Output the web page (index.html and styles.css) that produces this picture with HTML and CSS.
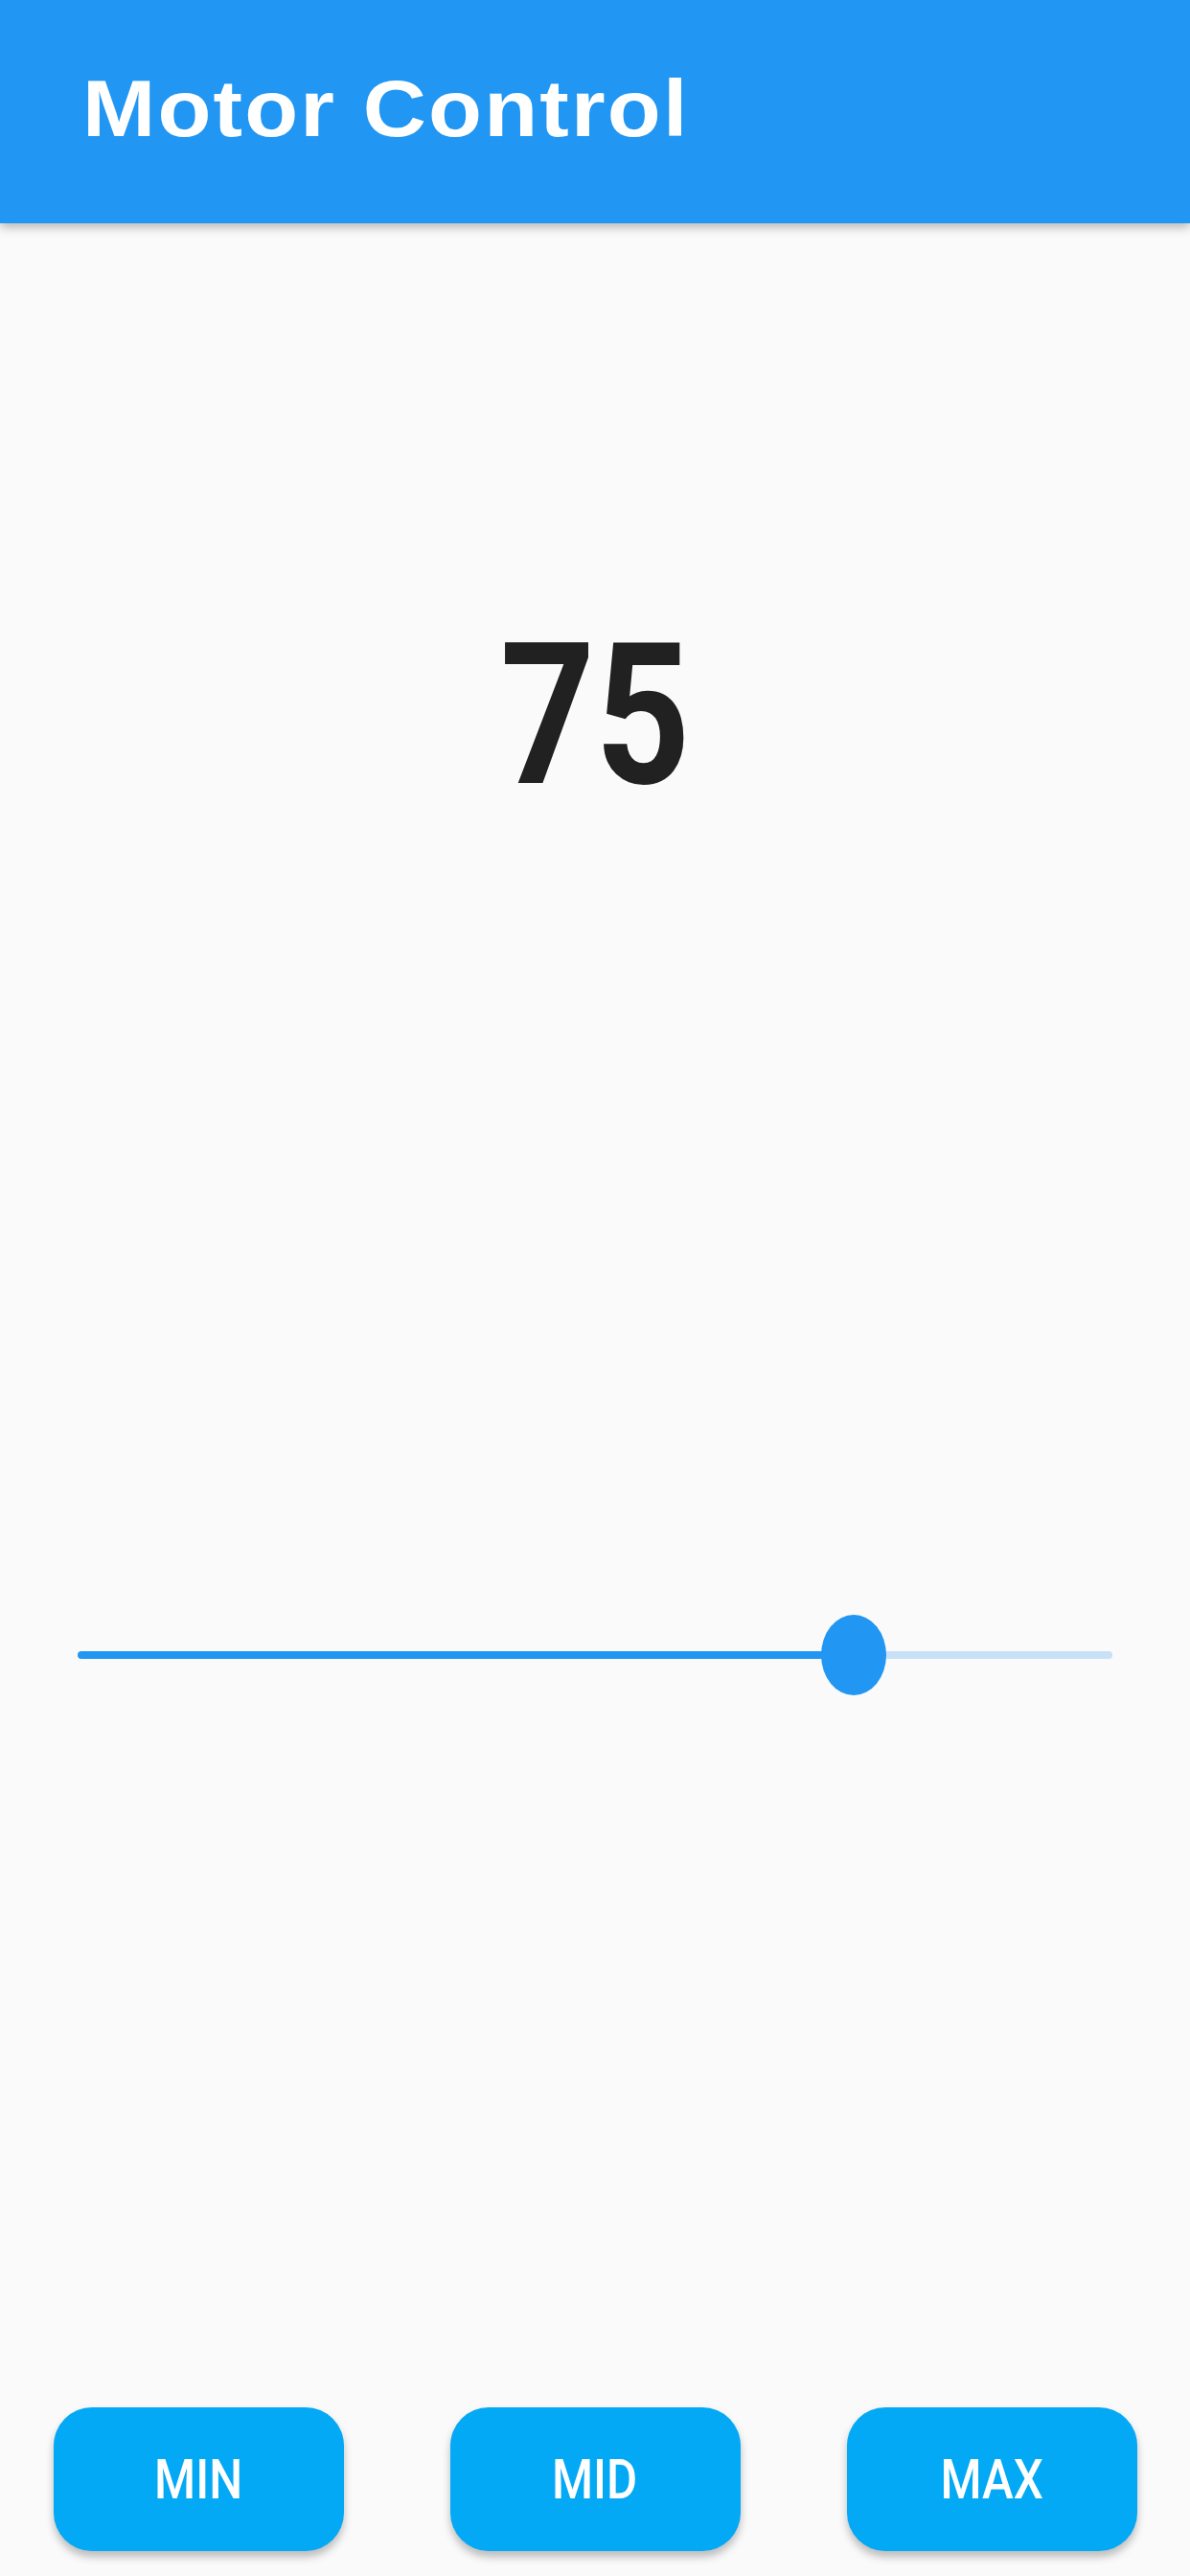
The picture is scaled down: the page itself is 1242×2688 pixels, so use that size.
FILE: index.html
```html
<!DOCTYPE html>
<html lang="en">

<head>
    <meta charset="UTF-8">
    <meta name="viewport" content="width=device-width, initial-scale=1.0">
    <title>Motor Control</title>

    <link rel="stylesheet" href="styles.css">
</head>

<body>
    <header class="app-bar">
        <h1 class="app-title">Motor Control</h1>
    </header>

    <main class="content">
        <div class="reading">
            <span id="value" class="reading-value">75</span>
        </div>

        <div class="slider">
            <div class="track">
                <div class="track-active" style="width: 75%"></div>
                <div class="track-rest"></div>
            </div>
            <div class="thumb" style="left: 75%"></div>
        </div>

        <div class="buttons">
            <button class="btn"><span>MIN</span></button>
            <button class="btn"><span>MID</span></button>
            <button class="btn"><span>MAX</span></button>
        </div>
    </main>
</body>

</html>
```

FILE: styles.css
```css
html, body {
    margin: 0;
    padding: 0;
}

body {
    width: 1242px;
    height: 2688px;
    background-color: #fafafa;
    font-family: Roboto, "Liberation Sans", sans-serif;
    overflow: hidden;
}

.app-bar {
    height: 233px;
    background-color: #2196f3;
    display: flex;
    align-items: center;
    padding-left: 86px;
    box-shadow: 0 4px 10px rgba(0, 0, 0, 0.28);
    position: relative;
    z-index: 1;
}

.app-title {
    margin: 0;
    color: white;
    font-family: "Liberation Sans", Arial, sans-serif;
    font-weight: 700;
    font-size: 84px;
    letter-spacing: 2px;
    line-height: 1;
    margin-top: -8px;
    transform: scaleX(1.09);
    transform-origin: left center;
}

.content {
    height: 2455px;
    display: flex;
    flex-direction: column;
}

.reading {
    margin-top: 412px;
    height: 204px;
    display: flex;
    justify-content: center;
}

.reading-value {
    font-family: Roboto, sans-serif;
    font-size: 206px;
    line-height: 204px;
    font-weight: 700;
    color: #212121;
    transform: scaleX(0.84);
}

.slider {
    position: relative;
    margin: 836px 81px 0 81px;
    height: 84px;
    display: flex;
    align-items: center;
}

.track {
    display: flex;
    width: 100%;
    height: 8px;
}

.track-active {
    background-color: #2196f3;
    border-radius: 4px 0 0 4px;
}

.track-rest {
    flex: 1;
    background-color: #c8e1f7;
    border-radius: 0 4px 4px 0;
}

.thumb {
    position: absolute;
    top: 0;
    width: 68px;
    height: 84px;
    margin-left: -34px;
    border-radius: 50%;
    background-color: #2196f3;
}

.buttons {
    margin-top: auto;
    margin-bottom: 26px;
    display: flex;
    justify-content: space-around;
}

.btn {
    width: 303px;
    height: 150px;
    border: none;
    border-radius: 40px;
    background-color: #03a9f4;
    color: white;
    font-family: Roboto, sans-serif;
    font-weight: 500;
    font-size: 58px;
    box-shadow: 0 6px 8px rgba(0, 0, 0, 0.25);
    cursor: pointer;
}

.btn span {
    display: inline-block;
    transform: scaleX(0.85);
}
```
